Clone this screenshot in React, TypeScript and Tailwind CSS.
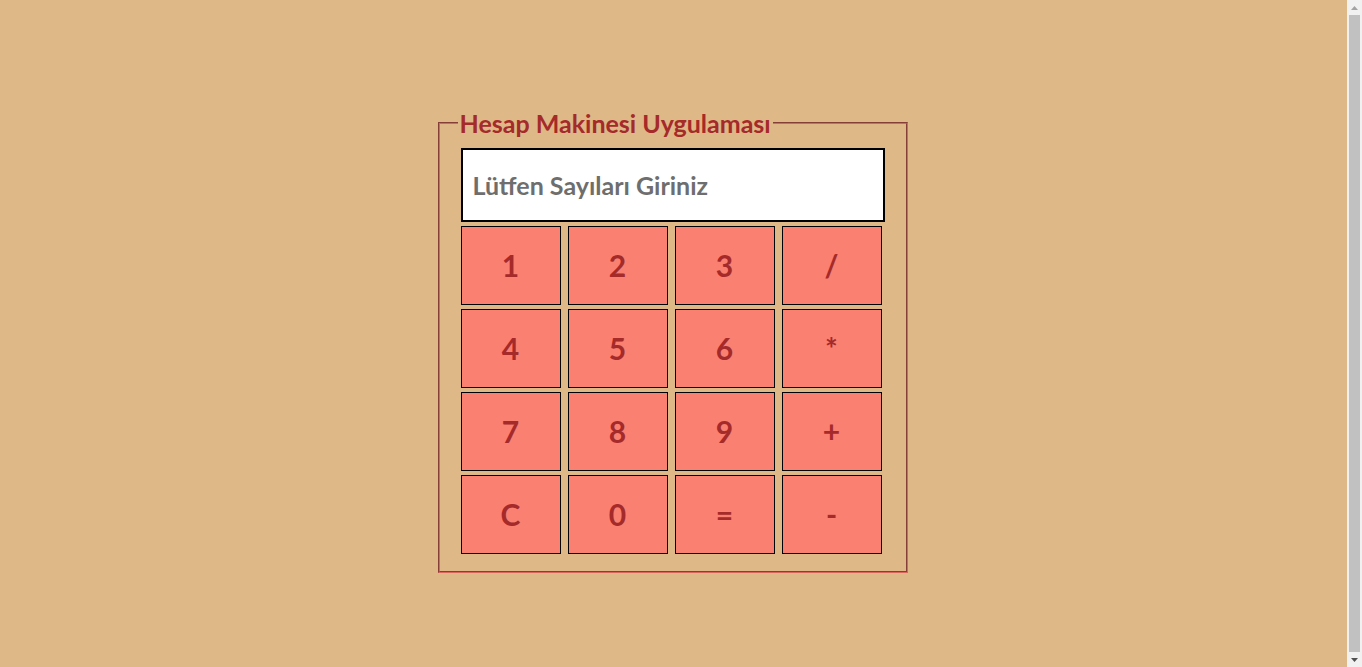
import { useState } from "react";

const keys = ["1", "2", "3", "/", "4", "5", "6", "*", "7", "8", "9", "+", "C", "0", "=", "-"];

export default function App() {
  const [value, setValue] = useState("");

  const press = (k: string) => {
    if (k === "C") return setValue("");
    if (k === "=") {
      try {
        // simple evaluation of the typed expression
        // eslint-disable-next-line no-new-func
        setValue(String(Function(`return (${value})`)()));
      } catch {
        setValue("");
      }
      return;
    }
    setValue(value + k);
  };

  return (
    <div className="flex h-[667px] overflow-hidden bg-[#deb887] font-['Lato','Open_Sans',sans-serif]">
      <main className="flex-1 pt-[109px] pr-[2px]">
        <fieldset className="mx-auto w-[469px] border-2 [border-style:groove] border-[#d9655c] px-[21px] pt-[11px] pb-[17px]">
          <legend className="-ml-[3px] px-[2px] text-[25px] leading-[28px] font-bold text-[#a52a2a]">
            Hesap Makinesi Uygulaması
          </legend>
          <input
            value={value}
            onChange={(e) => setValue(e.target.value)}
            placeholder="Lütfen Sayıları Giriniz"
            className="block h-[74px] w-[424px] border-2 border-black bg-white px-[10px] text-[25px] font-bold text-[#333] outline-none placeholder:text-[#6e6e6e]"
          />
          <div className="mt-[4px] grid grid-cols-[repeat(4,100px)] gap-x-[7px] gap-y-[4px]">
            {keys.map((k) => (
              <button
                key={k}
                onClick={() => press(k)}
                className="h-[79px] border border-black bg-[#fa8072] text-[30px] font-bold text-[#a52a2a] cursor-pointer"
              >
                {k}
              </button>
            ))}
          </div>
        </fieldset>
      </main>

      {/* scrollbar as it shows in the screenshot */}
      <div className="flex w-[15px] flex-col bg-[#f1f1f1]">
        <div className="flex h-[15px] items-center justify-center">
          <svg width="7" height="4" viewBox="0 0 7 4"><path d="M3.5 0L7 4H0z" fill="#a3a3a3" /></svg>
        </div>
        <div className="mx-[2px] flex-1 bg-[#c1c1c1]" />
        <div className="h-[15px] flex items-center justify-center">
          <svg width="7" height="4" viewBox="0 0 7 4"><path d="M0 0h7L3.5 4z" fill="#505050" /></svg>
        </div>
      </div>
    </div>
  );
}
